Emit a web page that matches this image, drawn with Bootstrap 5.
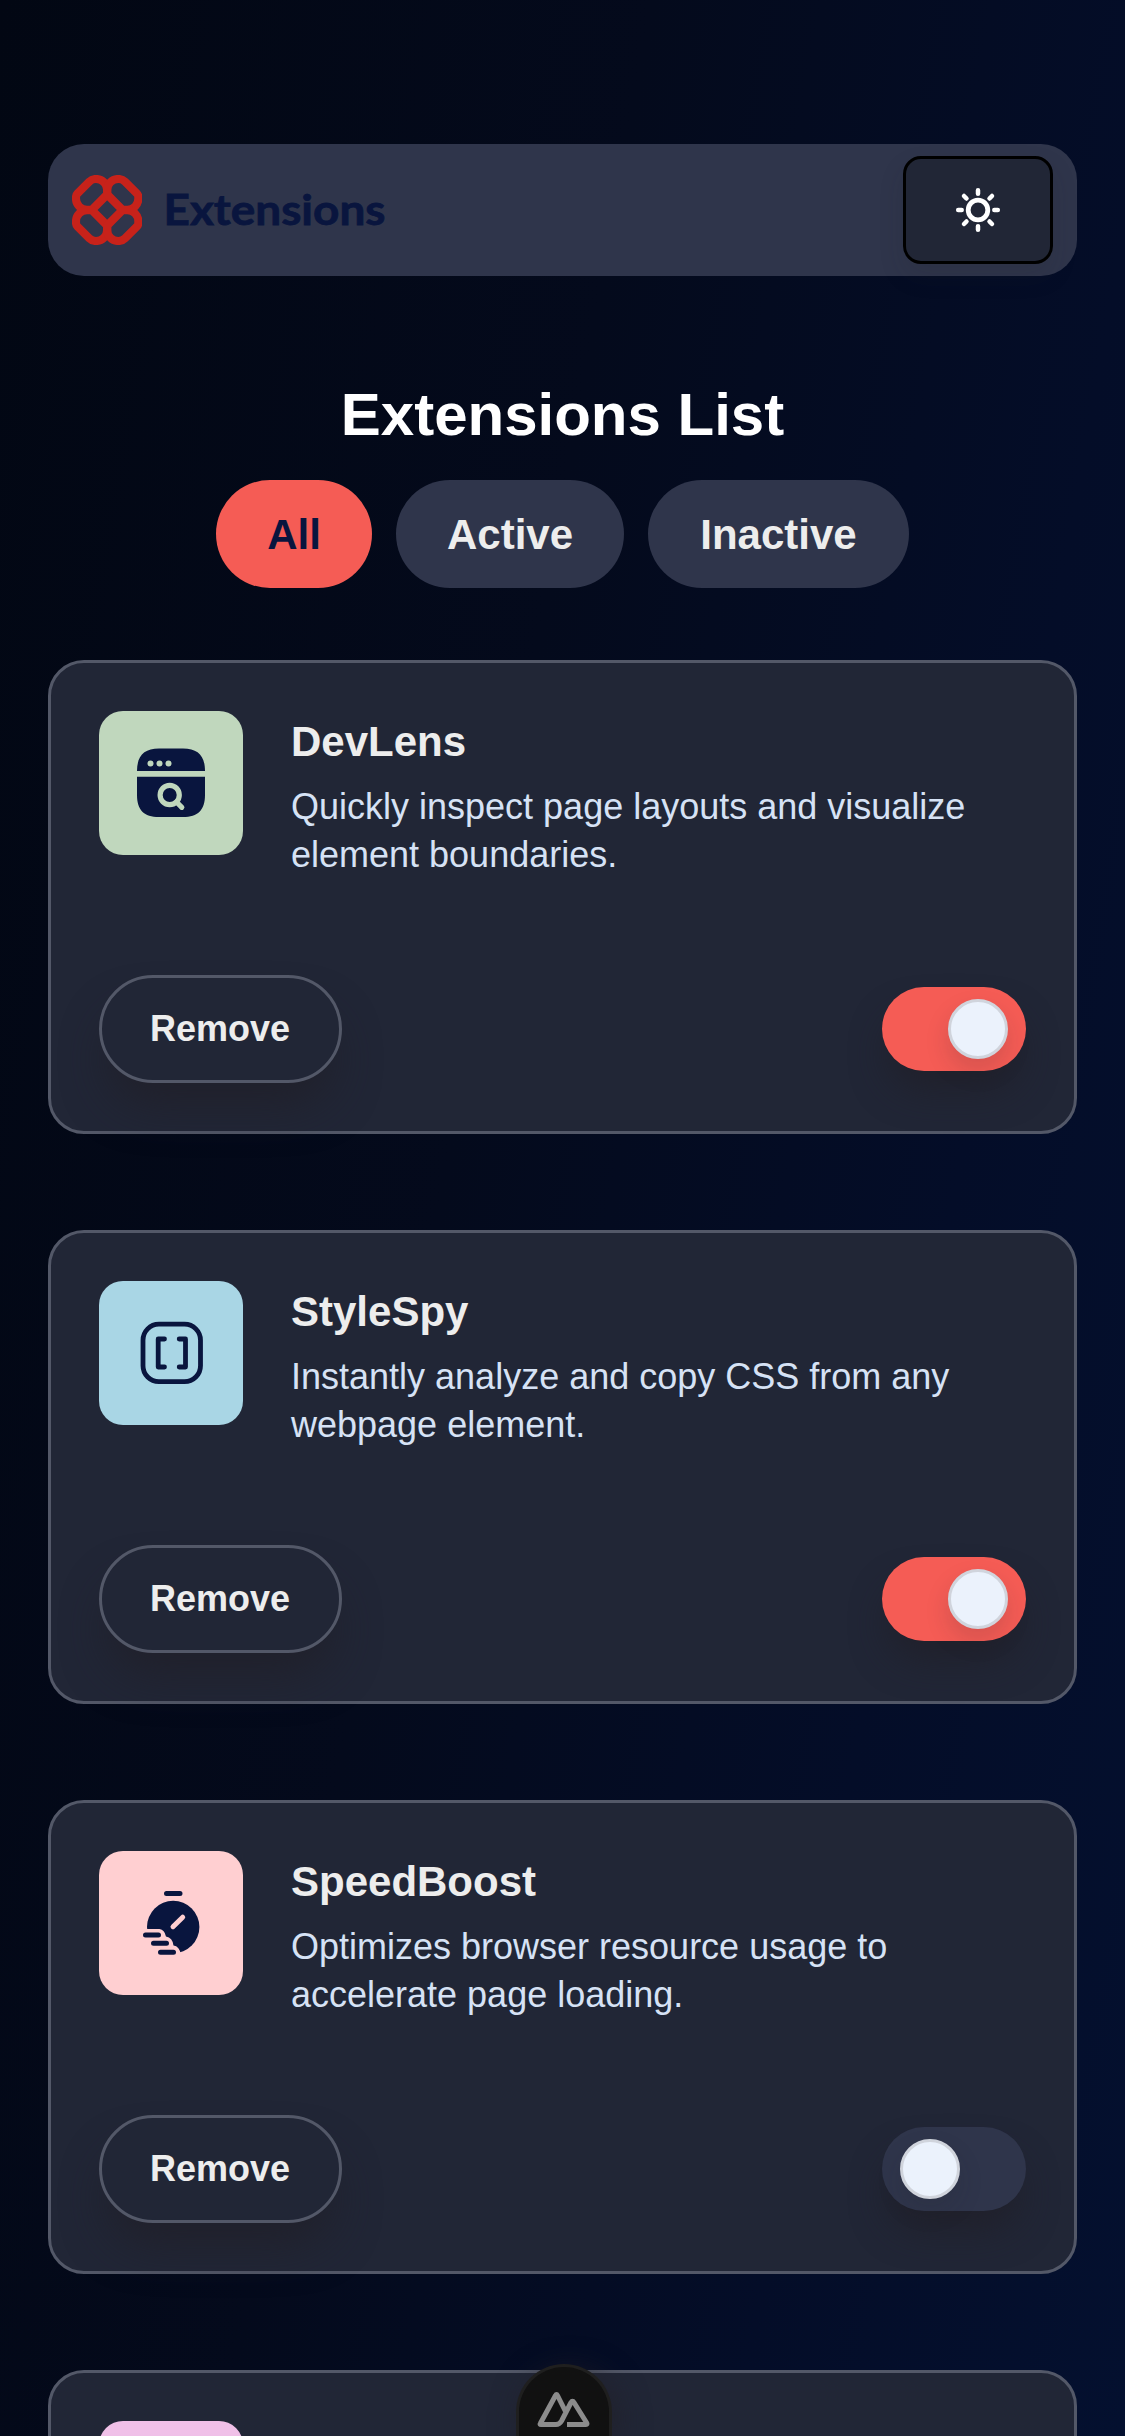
<!DOCTYPE html>
<html lang="en">
<head>
<meta charset="utf-8">
<meta name="viewport" content="width=device-width, initial-scale=1">
<title>Extensions</title>
<link href="https://cdn.jsdelivr.net/npm/bootstrap@5.3.0/dist/css/bootstrap.min.css" rel="stylesheet">
<style>
html{overflow:hidden}
body{font-family:"Liberation Sans",Arial,sans-serif;height:2436px;overflow:hidden;color:#ededed;background:linear-gradient(100deg,#020713 0%,#040a1c 42%,#040d28 75%,#04102f 100%)}
.page{padding:144px 48px 0;height:2436px;overflow:hidden}
.topbar{height:132px;flex:none;border-radius:36px;background:#2f354b;padding:0 24px}
.brand-mark{width:70px;height:70px}
.brand-word{width:230px;height:60px;margin-left:20px}
.brand-word text{font-family:Lato,sans-serif;font-weight:700;font-size:42px;fill:#09153e;stroke:#09153e;stroke-width:.8px}
.theme-btn{width:150px;height:108px;border:3px solid #000;border-radius:18px;background:#212636;box-shadow:0 12px 24px rgba(33,31,40,.15)}
.list-title{font-size:60px;font-weight:700;line-height:72px;color:#fff;margin:103px 0 29px}
.pill{height:108px;border-radius:54px;padding:1px 0 0;border:0;background:#2f354b;color:#ededed;font-size:42px;font-weight:700;line-height:107px}
.pill.active{background:#f55c55;color:#09153e}
.pill-s{width:156px}
.pill-m{width:228px}
.pill-l{width:261px}
.ext-list{margin-top:72px;gap:96px}
.ext-card{height:474px;flex:none;border:3px solid #535868;border-radius:36px;background:#212636;padding:48px;color:#ededed}
.tile{width:144px;height:144px;border-radius:24px;flex:none}
.ext-name{font-size:42px;font-weight:700;line-height:60px;margin:1px 0 11px}
.ext-desc{font-size:36px;line-height:48px;color:#d6e2f5;margin:0}
.remove{height:108px;width:243px;border:3px solid #535868;border-radius:54px;background:#212636;color:#ededed;font-size:36px;font-weight:700;padding:0 1px 0 0;box-shadow:0 30px 45px -9px rgba(33,31,40,.8)}
.toggle{width:144px;height:84px;border-radius:42px;background:#2f354b;padding:0 18px;box-shadow:0 24px 36px -6px rgba(32,31,40,.8)}
.toggle.on{background:#f55c55}
.knob{width:60px;height:60px;border-radius:50%;background:#ebf2fc;border:3px solid #d0d4dc;box-shadow:0 12px 24px rgba(33,31,40,.15)}
.devtools{left:516px;top:2364px;width:96px;height:72px;border-radius:48px 48px 0 0;border:3px solid #1f1f1f;border-bottom:0;background:#111;box-shadow:6px 6px 30px rgba(33,31,40,.7)}
</style>
</head>
<body class="position-relative">
<main class="page d-flex flex-column">
<header class="topbar d-flex align-items-center justify-content-between">
  <div class="d-flex align-items-center">
    <svg class="brand-mark" viewBox="96 135 210 210" fill="none" stroke="#c7221a" stroke-width="24.500">
      <defs><path id="loop" d="M108 202Q108 195 112 191L148 155Q156 147 168 147A33.500 33.500 0 0 1 201.500 180V193.500L155.500 239.500H141A33.500 33.500 0 0 1 108 206Z"/></defs>
      <use href="#loop"/><use href="#loop" transform="matrix(-1 0 0 1 403 0)"/><use href="#loop" transform="matrix(1 0 0 -1 0 480)"/><use href="#loop" transform="matrix(-1 0 0 -1 403 480)"/>
    </svg>
    <svg class="brand-word" viewBox="0 0 230 60"><text x="1.500" y="45" textLength="222" lengthAdjust="spacingAndGlyphs">Extensions</text></svg>
  </div>
  <button class="theme-btn p-0 d-flex align-items-center justify-content-center" aria-label="Theme">
    <svg width="66" height="66" viewBox="0 0 66 66" fill="none" stroke="#fff" stroke-width="4.500" stroke-linecap="round"><circle cx="33" cy="33" r="9.800" stroke-width="4.800"/><path d="M33 13.200v3.500M33 49.300v3.500M13.200 33h3.500M49.300 33h3.500M19 19l2.500 2.500M44.500 44.500l2.500 2.500M47 19l-2.500 2.500M21.500 44.500L19 47"/></svg>
  </button>
</header>
<h1 class="list-title text-center">Extensions List</h1>
<nav class="d-flex justify-content-center gap-4">
  <button class="pill pill-s active">All</button><button class="pill pill-m">Active</button><button class="pill pill-l">Inactive</button>
</nav>
<section class="ext-list d-flex flex-column">
  <article class="ext-card d-flex flex-column justify-content-between">
    <div class="d-flex gap-5">
      <svg class="tile" viewBox="0 0 144 144"><rect width="144" height="144" fill="#c0d7bd"/><path fill="#09153e" d="M38 60C38 45 45 37.500 60 37.500H84C99 37.500 106 45 106 60ZM38 65.700H106V84C106 99 99 106 84 106H60C45 106 38 99 38 84Z"/><g fill="#c0d7bd"><circle cx="51.500" cy="52.500" r="3"/><circle cx="60.500" cy="52.500" r="3"/><circle cx="69.500" cy="52.500" r="3"/></g><g fill="none" stroke="#c0d7bd" stroke-width="5.200" stroke-linecap="round"><circle cx="70.700" cy="84" r="9.600"/><path d="M77.500 91l5.300 5.300"/></g></svg>
      <div><h2 class="ext-name">DevLens</h2><p class="ext-desc">Quickly inspect page layouts and visualize<br>element boundaries.</p></div>
    </div>
    <div class="d-flex align-items-center justify-content-between"><button class="remove">Remove</button><div class="toggle on d-flex align-items-center justify-content-end" role="switch"><span class="knob"></span></div></div>
  </article>
  <article class="ext-card d-flex flex-column justify-content-between">
    <div class="d-flex gap-5">
      <svg class="tile" viewBox="0 0 144 144"><rect width="144" height="144" fill="#a9d6e5"/><g fill="none" stroke="#09153e" stroke-width="4.800" stroke-linecap="round" stroke-linejoin="round"><rect x="44" y="43.200" width="57.500" height="57.500" rx="16"/><path d="M65.500 58H59.200V86H65.500M80.200 58H86.500V86H80.200"/></g></svg>
      <div><h2 class="ext-name">StyleSpy</h2><p class="ext-desc">Instantly analyze and copy CSS from any<br>webpage element.</p></div>
    </div>
    <div class="d-flex align-items-center justify-content-between"><button class="remove">Remove</button><div class="toggle on d-flex align-items-center justify-content-end" role="switch"><span class="knob"></span></div></div>
  </article>
  <article class="ext-card d-flex flex-column justify-content-between">
    <div class="d-flex gap-5">
      <svg class="tile" viewBox="0 0 144 144"><rect width="144" height="144" fill="#ffcfd1"/><circle cx="74.200" cy="76" r="26.200" fill="#09153e"/><path fill="#ffcfd1" d="M44 78H60.500Q65.500 78.500 67 85.500Q73.500 86.500 74.500 94.500Q80.500 95 82 104H44Z"/><g fill="none" stroke="#09153e" stroke-width="5" stroke-linecap="round"><path d="M67.500 42.500H81M46.500 84H59.500M54.500 92.200H67.500M61.500 101.200H74.500"/><path stroke="#ffcfd1" d="M74 75.700L83.700 66.200"/></g></svg>
      <div><h2 class="ext-name">SpeedBoost</h2><p class="ext-desc">Optimizes browser resource usage to<br>accelerate page loading.</p></div>
    </div>
    <div class="d-flex align-items-center justify-content-between"><button class="remove">Remove</button><div class="toggle d-flex align-items-center" role="switch"><span class="knob"></span></div></div>
  </article>
  <article class="ext-card"><svg class="tile d-block" viewBox="0 0 144 144"><rect width="144" height="144" fill="#f0c0e8"/></svg></article>
</section>
</main>
<div class="devtools position-absolute">
  <svg class="d-block" width="90" height="69" viewBox="0 0 90 69" fill="none" stroke="#8c8c8c" stroke-width="5" stroke-linejoin="round" stroke-linecap="butt"><path d="M46.500 44.500L38.500 28.500Q37.500 26.500 36.500 28.500L21.300 56.500Q20.500 57.500 22 57.500H37Q40.500 57.500 42.500 54L52 35.500Q53.500 33 55 35.500L67.800 56Q68.500 57.500 67 57.500H48"/></svg>
</div>
<script src="https://cdn.jsdelivr.net/npm/bootstrap@5.3.0/dist/js/bootstrap.bundle.min.js"></script>
</body>
</html>
